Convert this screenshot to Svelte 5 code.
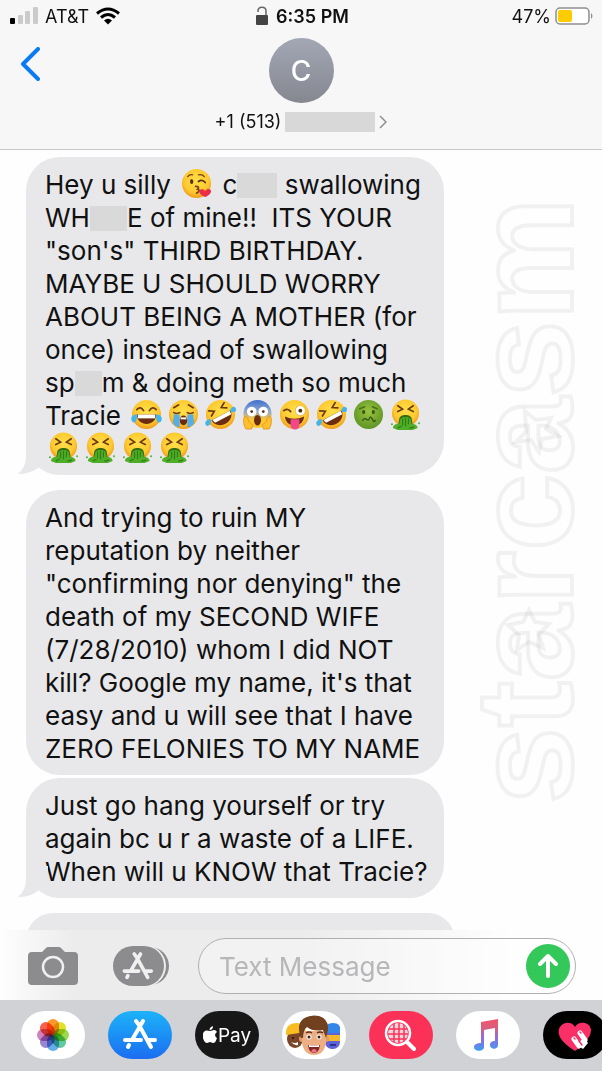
<script lang="ts">
	type Part = string | { mask: number } | { emoji: string };

	const carrier = 'AT&T';
	const time = '6:35 PM';
	const battery = 47;
	const contact = { initial: 'C', number: '+1 (513)' };

	const messages: Array<{ id: number; lines: Part[][]; tail: boolean; size: string }> = [
		{
			id: 1,
			tail: true,
			size: 'regular',
			lines: [
				['Hey u silly ', { emoji: 'kiss' }, ' c', { mask: 40 }, ' swallowing'],
				['WH', { mask: 37 }, 'E of mine!!  ITS YOUR'],
				['"son\'s" THIRD BIRTHDAY.'],
				['MAYBE U SHOULD WORRY'],
				['ABOUT BEING A MOTHER (for'],
				['once) instead of swallowing'],
				['sp', { mask: 27 }, 'm & doing meth so much'],
				[
					'Tracie ',
					{ emoji: 'joy' },
					{ emoji: 'sob' },
					{ emoji: 'rofl' },
					{ emoji: 'scream' },
					{ emoji: 'zany' },
					{ emoji: 'rofl' },
					{ emoji: 'sick' },
					{ emoji: 'vomit' }
				],
				[{ emoji: 'vomit' }, { emoji: 'vomit' }, { emoji: 'vomit' }, { emoji: 'vomit' }]
			]
		},
		{
			id: 2,
			tail: false,
			size: 'regular',
			lines: [
				['And trying to ruin MY'],
				['reputation by neither'],
				['"confirming nor denying" the'],
				['death of my SECOND WIFE'],
				['(7/28/2010) whom I did NOT'],
				['kill? Google my name, it\'s that'],
				['easy and u will see that I have'],
				['ZERO FELONIES TO MY NAME']
			]
		},
		{
			id: 3,
			tail: true,
			size: 'regular',
			lines: [
				['Just go hang yourself or try'],
				['again bc u r a waste of a LIFE.'],
				['When will u KNOW that Tracie?']
			]
		},
		{ id: 4, tail: false, size: 'wide', lines: [[' ']] }
	];

	const apps = ['Photos', 'App Store', 'Apple Pay', 'Memoji', 'Images', 'Music', 'Digital Touch'];

	const petals = ['#fb9a28', '#e3e02a', '#9bd84f', '#5fc9a0', '#64ade8', '#9c86cf', '#cf82bb', '#f95f4a'];

	let draft = $state('');
</script>

{#snippet emoji(kind: string)}
	<svg class="emoji" viewBox="0 0 32 32" role="img" aria-label={kind}>
		{#if kind === 'scream'}
			<circle cx="16" cy="15.5" r="14.5" fill="url(#scared)" />
			<circle cx="10" cy="13" r="5" fill="#fff" />
			<circle cx="22" cy="13" r="5" fill="#fff" />
			<circle cx="10" cy="13" r="1.4" fill="#4a2a12" />
			<circle cx="22" cy="13" r="1.4" fill="#4a2a12" />
			<ellipse cx="16" cy="22" rx="3.6" ry="5.4" fill="#6b2c12" />
			<path d="M2 19c2-2 4 0 5 4l4 4-1 4H4c-2-3-3-8-2-12zM30 19c-2-2-4 0-5 4l-4 4 1 4h6c2-3 3-8 2-12z" fill="#ffc02e" stroke="#e28a16" stroke-width=".8" />
		{:else if kind === 'sick'}
			<circle cx="16" cy="16" r="15" fill="url(#green)" />
			<path d="M7 10l5-2M25 10l-5-2" stroke="#47701c" stroke-width="1.6" stroke-linecap="round" />
			<ellipse cx="11" cy="13.5" rx="1.6" ry="2.2" fill="#35561a" />
			<ellipse cx="21" cy="13.5" rx="1.6" ry="2.2" fill="#35561a" />
			<path d="M10 22q2-3 4-1t3-1 3 1 3 1" stroke="#35561a" stroke-width="1.4" fill="none" stroke-linecap="round" />
		{:else if kind === 'vomit'}
			<circle cx="16" cy="14.5" r="14" fill="url(#yellow)" />
			<path d="M8 7l5 3.5-5 2.5M24 7l-5 3.5 5 2.5" stroke="#6b3a12" stroke-width="1.7" fill="none" stroke-linecap="round" />
			<path d="M9.5 21c0-6 13-6 13 0l1 6H8.500z" fill="#356e12" />
			<path d="M11 20q5-3 10 0l1.5 6c4-1 6 2 6 4l-5 2H8l-5-2c0-3 3-5 6.5-4z" fill="#4fae27" />
			<path d="M13 20v7M16 19v9M19 20v6M8 30l4-2M20 30l5-1" stroke="#2f7d16" stroke-width="1.2" />
			<circle cx="2" cy="26" r="1" fill="#4fae27" />
			<circle cx="30" cy="25" r="1" fill="#4fae27" />
		{:else}
			<circle cx="16" cy="16" r="15" fill="url(#yellow)" />
			{#if kind === 'kiss'}
				<path d="M7 9q2-3 5-2M18 7q4-1 6 2" stroke="#75401a" stroke-width="1.3" fill="none" stroke-linecap="round" />
				<ellipse cx="11" cy="14" rx="1.7" ry="2.6" fill="#5b3010" />
				<path d="M18 14q4-3 7 1" stroke="#5b3010" stroke-width="1.8" fill="none" stroke-linecap="round" />
				<path d="M15 19q5 0 2 3q4 1-1 4" stroke="#75401a" stroke-width="1.7" fill="none" stroke-linecap="round" />
				<path d="M25 30c-8-3-7-9-3-8 2 0 2 1 3 2 1-3 6-3 6 0 0 3-4 5-6 6z" fill="#ec2d45" />
			{:else if kind === 'joy'}
				<path d="M6 11q4-4 7 1M19 12q3-5 7-1" stroke="#6b3a12" stroke-width="1.8" fill="none" stroke-linecap="round" />
				<path d="M6 16h20c0 13-20 13-20 0z" fill="#6b2c12" />
				<path d="M7 16h18v4H7z" fill="#fff" />
				<path d="M6 16c-5 0-7 4-5 7s6 1 5-7zM26 16c5 0 7 4 5 7s-6 1-5-7z" fill="#45b4ea" />
			{:else if kind === 'sob'}
				<path d="M6 9l5-3M26 9l-5-3M6 14q3 2 6 0M20 14q3 2 6 0" stroke="#6b3a12" stroke-width="1.7" fill="none" stroke-linecap="round" />
				<ellipse cx="16" cy="22" rx="4" ry="5" fill="#6b2c12" />
				<path d="M13 19h6v2h-6z" fill="#fff" />
				<path d="M6 16h6v13q-4 0-7-4zM20 16h6l1 9q-3 4-7 4z" fill="#55aee8" />
			{:else if kind === 'rofl'}
				<g transform="rotate(-28 16 16)">
					<path d="M7 7l5 3-5 3M25 7l-5 3 5 3" stroke="#6b3a12" stroke-width="1.7" fill="none" stroke-linecap="round" />
					<path d="M5 17h22c0 13-22 13-22 0z" fill="#6b2c12" />
					<path d="M6 17h20v4H7z" fill="#fff" />
				</g>
				<path d="M6 21c-5 0-7 4-5 6s6 0 5-6zM26 12c1-5 5-5 6-2s-3 5-6 2z" fill="#45b4ea" />
			{:else}
				<path d="M5 12q4-3 7 1" stroke="#6b3a12" stroke-width="1.9" fill="none" stroke-linecap="round" />
				<circle cx="22" cy="12" r="5.2" fill="#fff" stroke="#d9932a" stroke-width=".6" />
				<circle cx="22" cy="12" r="2" fill="#4a2a12" />
				<path d="M6 18q10 5 20 0-1 9-10 9T6 18z" fill="#6b2c12" />
				<path d="M12 21h9v6c0 6-9 6-9 0z" fill="#f2478b" />
			{/if}
		{/if}
	</svg>
{/snippet}

{#snippet storeGlyph()}
	<path d="M35 10L24 29M28 10l3 4M31 14l12 22M17 29h16M41 29h6M21 34l-1 2" />
{/snippet}

<svg class="defs" aria-hidden="true">
	<defs>
		<radialGradient id="yellow" cx=".5" cy=".4" r=".6">
			<stop offset="0" stop-color="#ffe04a" />
			<stop offset=".7" stop-color="#fdc82f" />
			<stop offset="1" stop-color="#ee9a1c" />
		</radialGradient>
		<radialGradient id="green" cx=".5" cy=".4" r=".6">
			<stop offset="0" stop-color="#9bc43d" />
			<stop offset="1" stop-color="#5d9426" />
		</radialGradient>
		<linearGradient id="scared" x1="0" y1="0" x2="0" y2="1">
			<stop offset="0" stop-color="#3f6fd0" />
			<stop offset=".4" stop-color="#8fa6cf" />
			<stop offset=".7" stop-color="#fdc82f" />
		</linearGradient>
		<linearGradient id="note" x1="0" y1="0" x2="0" y2="1">
			<stop offset="0" stop-color="#f2526c" />
			<stop offset=".3" stop-color="#d8607f" />
			<stop offset=".6" stop-color="#8f6be0" />
			<stop offset="1" stop-color="#3f9df0" />
		</linearGradient>
	</defs>
</svg>

<div class="phone">
	<header>
		<div class="status">
			<div class="status-left">
				<svg width="28" height="18" viewBox="0 0 28 18" aria-hidden="true">
					<rect y="11" width="5" height="6" rx="1" fill="#000" />
					<rect x="8" y="8" width="5" height="9" rx="1" fill="#cbcbcb" />
					<rect x="15" y="4" width="5" height="13" rx="1" fill="#cbcbcb" />
					<rect x="23" y="0" width="5" height="17" rx="1" fill="#cbcbcb" />
				</svg>
				<span>{carrier}</span>
				<svg width="24" height="18" viewBox="0 0 24 18" fill="none" stroke="#000" stroke-width="3" aria-hidden="true">
					<path d="M1 6.500q11-9 22 0M5 10.500q7-6 14 0" />
					<path d="M8 13.500q4-3.500 8 0l-4 4z" fill="#000" stroke="none" />
				</svg>
			</div>
			<div class="status-time">
				<svg width="14" height="20" viewBox="0 0 14 20" aria-hidden="true">
					<path d="M3 6V5C3 0 11 0 11 5v5" fill="none" stroke="#666" stroke-width="1.500" />
					<rect x="1" y="9" width="12" height="10" rx="1" fill="#444" />
				</svg>
				<strong>{time}</strong>
			</div>
			<div class="status-right">
				<span>{battery}%</span>
				<svg width="39" height="18" viewBox="0 0 39 18" aria-hidden="true">
					<rect x="1" y="1" width="33" height="16" rx="4" fill="#fff" stroke="#8e8e90" stroke-width="1.500" />
					<rect x="3" y="3" width="14" height="12" rx="2" fill="#fc0" />
					<path d="M36 6q3 3 0 6z" fill="#8e8e90" />
				</svg>
			</div>
		</div>
		<div class="nav">
			<button class="back" aria-label="Back">
				<svg width="20" height="34" viewBox="0 0 20 34" fill="none" stroke="#0b7bf3" stroke-width="4" stroke-linecap="round" stroke-linejoin="round">
					<path d="M18 2L3 17l15 15" />
				</svg>
			</button>
			<button class="contact">
				<span class="avatar">{contact.initial}</span>
				<span class="number">
					{contact.number}
					<span class="hidden-number"></span>
					<svg width="8" height="14" viewBox="0 0 8 14" fill="none" stroke="#8e8e93" stroke-width="1.500" aria-hidden="true">
						<path d="M1 1l6 6-6 6" />
					</svg>
				</span>
			</button>
		</div>
	</header>

	<main>
		{#each messages as message (message.id)}
			<div class="bubble {message.size}" class:tail={message.tail}>
				{#each message.lines as line}
					<div class="line">{#each line as part}{#if typeof part === 'string'}{part}{:else if 'mask' in part}<span class="mask" style="width: {part.mask}px"></span>{:else}{@render emoji(part.emoji)}{/if}{/each}</div>
				{/each}
				{#if message.tail}
					<svg class="tail-shape" viewBox="0 0 30 32" aria-hidden="true">
						<path d="M8 0v14q0 10-8 17 12 0 20-6l10-10V0z" />
					</svg>
				{/if}
			</div>
		{/each}
	</main>

	<form class="compose" onsubmit={(event) => event.preventDefault()}>
		<button type="button" aria-label="Camera">
			<svg width="50" height="40" viewBox="0 0 50 40">
				<path d="M4 6h10l4-4q1-1 2-1h11q1 0 2 1l4 4h9q4 0 4 4v25q0 4-4 4H4q-4 0-4-4V10q0-4 4-4z" fill="#8c8c8e" />
				<circle cx="25" cy="21" r="10" fill="none" stroke="#f0f0f0" stroke-width="2.500" />
			</svg>
		</button>
		<button type="button" aria-label="Apps">
			<svg width="56" height="40" viewBox="0 0 56 40">
				<rect x="8" y="1" width="48" height="38" rx="19" fill="#8c8c8e" />
				<rect x="-1" y="-1" width="54" height="42" rx="21" fill="#ededee" />
				<rect width="51" height="40" rx="20" fill="#8c8c8e" />
				<g transform="translate(-4 -1) scale(.9)" fill="none" stroke="#f0f0f0" stroke-width="4" stroke-linecap="round">{@render storeGlyph()}</g>
			</svg>
		</button>
		<div class="field">
			<input type="text" placeholder="Text Message" aria-label="Text Message" bind:value={draft} />
			<button class="send" aria-label="Send">
				<svg width="44" height="44" viewBox="0 0 44 44" fill="none" stroke="#fff" stroke-width="4" stroke-linecap="round" stroke-linejoin="round">
					<path d="M22 32V12M14 20l8-8 8 8" />
				</svg>
			</button>
		</div>
	</form>

	<nav class="drawer" aria-label="Apps">
		{#each apps as app}
			<button class="app {app.toLowerCase().replace(' ', '-')}" aria-label={app}>
				{#if app === 'Apple Pay'}
					<svg width="14" height="18" viewBox="0 0 14 18" fill="#fff" aria-hidden="true">
						<path d="M10 0q0 4-3.500 4Q6.500 1 10 0zM7 5c2 0 2-1 4-1q2 0 3 2c-3 2-2 5 0 6-1 3-2 5-4 5-1 0-2-1-3-1s-2 1-3 1c-3 0-7-9-2-12 2-1 3 0 5 0z" />
					</svg>
					<span>Pay</span>
				{:else}
					<svg width="64" height="48" viewBox="0 0 64 48" fill="none" aria-hidden="true">
						{#if app === 'Photos'}
							{#each petals as color, i}
								<rect class="petal" x="26" y="8" width="12" height="16" rx="6" fill={color} transform="rotate({i * 45} 32 24)" />
							{/each}
						{:else if app === 'App Store'}
							<g stroke="#fff" stroke-width="4" stroke-linecap="round">{@render storeGlyph()}</g>
						{:else if app === 'Memoji'}
							<ellipse cx="13" cy="28" rx="8" ry="9" fill="#7a4526" />
							<path d="M4 24q-1-12 11-12 7 0 9 9l-20 3z" fill="#f8bd20" />
							<circle cx="11" cy="27" r="1" fill="#23120a" />
							<path d="M9 31q4 2 7 0v3q-4 1-7-3z" fill="#fff" />
							<rect x="43" y="13" width="15" height="25" rx="7" fill="#5e62d6" />
							<path d="M43 19q0-7 8-7t7 7v3H43z" fill="#3486e8" />
							<path d="M43 24h15v6H43z" fill="#f4b82c" />
							<path d="M48 34h6" stroke="#28358c" stroke-width="2" />
							<circle cx="20" cy="28" r="3" fill="#e09a70" />
							<circle cx="44" cy="28" r="3" fill="#e09a70" />
							<path d="M20 20h24v12q-2 12-12 12T20 32z" fill="#edae83" />
							<path d="M19 27Q14 14 21 8q7-5 16-3 10 3 9 14l-2 8-3-8q-10 2-16-3-4 3-4 11z" fill="#70401f" />
							<path d="M24 22q3-2 6 0M35 22q3-2 6 0" stroke="#5d321b" stroke-width="1.500" />
							<circle cx="27" cy="26" r="2.500" fill="#fff" />
							<circle cx="37" cy="26" r="2.500" fill="#fff" />
							<circle cx="27" cy="26" r="1.500" fill="#33211a" />
							<circle cx="37" cy="26" r="1.500" fill="#33211a" />
							<path d="M26 34q6 1 12 0-1 8-6 8t-6-8z" fill="#812928" />
							<path d="M27 34q5 1 10 0v2H27z" fill="#fff" />
							<path d="M29 40q3-4 6 0-3 3-6 0z" fill="#f1748a" />
						{:else if app === 'Images'}
							<circle cx="29" cy="22" r="10" fill="#fff" opacity=".8" />
							<path d="M18 18h22M18 23h22M19 28h21M25 11v22M30 11v22M35 12v20" stroke="#fb3158" stroke-width="1.500" />
							<circle cx="29" cy="22" r="12" stroke="#fff" stroke-width="2.500" />
							<path d="M38 31l7 7" stroke="#fff" stroke-width="4" stroke-linecap="round" />
						{:else if app === 'Music'}
							<path d="M25 11l17-3v26c0 5-8 5-8 0 0-3 2-4 5-4V17l-11 2v17c0 5-10 5-10 0 0-3 4-4 7-4z" fill="url(#note)" />
						{:else}
							<path d="M32 40Q13 28 16 18c3-8 13-8 16-2 3-6 15-6 16 3 0 8-8 15-16 21z" fill="#fb2f68" />
							<path d="M31 28l5 7M37 22l5 7" stroke="#fff" stroke-width="5" stroke-linecap="round" />
							<path d="M34 34l6 4 5-6-4-6z" fill="#fff" />
							<path d="M31 27l1 1M37 21l1 1M36 30l3 4" stroke="#fb2f68" stroke-width="1.500" stroke-linecap="round" />
						{/if}
					</svg>
				{/if}
			</button>
		{/each}
	</nav>

	<svg class="watermark" viewBox="0 0 180 640" aria-hidden="true">
		<text x="-624" y="150" transform="rotate(-90)">starcasm</text>
		<path d="M103 231l11 9 15-2-5 11 12 7-16 3-3 13-8-12-15 2 10-10z" />
		<path d="M107 430l6 12 14 2-10 10 4 14-14-6-12 8 2-15-11-10 15-3z" />
	</svg>
</div>

<style>
	:global(body) {
		margin: 0;
		background: #fefefe;
	}

	.defs {
		position: absolute;
		width: 0;
		height: 0;
	}

	.phone {
		position: relative;
		display: flex;
		flex-direction: column;
		height: 100vh;
		overflow: hidden;
		background: #fefefe;
		color: #111;
		font-family: Inter, Roboto, sans-serif;
	}

	button {
		padding: 0;
		border: none;
		background: none;
		color: inherit;
		font: inherit;
		cursor: pointer;
	}

	svg {
		display: block;
		flex: none;
	}

	header {
		border-bottom: 1px solid #c9c9c9;
		background: #f7f7f7;
	}

	.status {
		display: grid;
		grid-template-columns: 1fr auto 1fr;
		align-items: center;
		height: 32px;
		padding: 0 8px 0 10px;
		font-size: 18px;
	}

	.status-left,
	.status-time,
	.status-right {
		display: flex;
		align-items: center;
		gap: 7px;
	}

	.status-time strong {
		font-weight: 600;
	}

	.status-right {
		justify-content: flex-end;
		gap: 4px;
	}

	.nav {
		display: grid;
		grid-template-columns: 1fr auto 1fr;
		align-items: start;
		padding: 6px 20px 16px;
	}

	.back {
		justify-self: start;
		padding-top: 9px;
	}

	.contact {
		display: flex;
		flex-direction: column;
		align-items: center;
		gap: 8px;
	}

	.avatar {
		display: flex;
		align-items: center;
		justify-content: center;
		width: 65px;
		height: 65px;
		border-radius: 50%;
		background: linear-gradient(#a3a8b5, #858790);
		color: white;
		font-size: 28px;
		font-weight: 500;
	}

	.number {
		display: flex;
		align-items: center;
		gap: 4px;
		font-size: 18px;
		line-height: 22px;
	}

	.hidden-number {
		width: 90px;
		height: 20px;
		background: #d8d8d8;
	}

	main {
		flex: 1 1 0;
		display: flex;
		flex-direction: column;
		align-items: flex-start;
		overflow: hidden;
		padding: 7px 26px 0;
	}

	.bubble {
		position: relative;
		flex: none;
		box-sizing: border-box;
		width: 76%;
		margin-bottom: 3px;
		padding: 11px 0 10px 19px;
		border-radius: 34px;
		background: #e8e8ea;
		font-size: 26px;
		line-height: 33px;
	}

	.bubble.tail {
		margin-bottom: 15px;
	}

	.bubble.wide {
		width: 78%;
	}

	.line {
		height: 33px;
		white-space: pre;
	}

	.tail-shape {
		position: absolute;
		left: -8px;
		bottom: 0;
		width: 30px;
		height: 32px;
		fill: #e8e8ea;
	}

	.mask {
		display: inline-block;
		height: 25px;
		background: #d9d9d9;
		vertical-align: -4px;
	}

	.emoji {
		display: inline-block;
		width: 31px;
		height: 31px;
		margin: 0 3px;
		vertical-align: -5px;
	}

	.compose {
		display: flex;
		align-items: center;
		padding: 8px 26px 6px 28px;
		background: linear-gradient(90deg, #fefefe 0, #ececed 12%, #ececed 50%, #fefefe 85%);
	}

	.compose > button:first-child {
		margin-right: 35px;
	}

	.field {
		display: flex;
		flex: 1;
		align-items: center;
		box-sizing: border-box;
		min-width: 0;
		height: 56px;
		margin-left: 29px;
		padding: 0 5px 0 20px;
		border: 1px solid #b0b0b2;
		border-radius: 28px;
		background: rgba(255, 255, 255, 0.3);
	}

	input {
		flex: 1;
		min-width: 0;
		padding: 0;
		border: none;
		outline: none;
		background: none;
		color: #111;
		font: 26px Inter, Roboto, sans-serif;
	}

	input::placeholder {
		color: #b7b7b9;
		opacity: 1;
	}

	.send {
		border-radius: 50%;
		background: #34c759;
	}

	.drawer {
		display: flex;
		gap: 23px;
		overflow: hidden;
		padding: 11px 0 12px 21px;
		background: #d1d2d6;
	}

	.app {
		display: flex;
		flex: none;
		align-items: center;
		justify-content: center;
		width: 64px;
		height: 48px;
		border-radius: 24px;
		overflow: hidden;
		background: white;
	}

	.app-store {
		background: linear-gradient(#1cb3f8, #1b6df1);
	}

	.apple-pay {
		gap: 1px;
		background: #171717;
		color: white;
		font-size: 19px;
	}

	.images {
		background: #fb3158;
	}

	.digital-touch {
		background: black;
	}

	.petal {
		mix-blend-mode: multiply;
	}

	.watermark {
		position: absolute;
		top: 180px;
		right: 0;
		width: 180px;
		height: 640px;
		fill: none;
		stroke: rgba(0, 0, 0, 0.05);
		stroke-width: 4px;
		pointer-events: none;
	}

	.watermark text {
		font-family: 'Liberation Sans', sans-serif;
		font-size: 138px;
		font-weight: 700;
	}
</style>
